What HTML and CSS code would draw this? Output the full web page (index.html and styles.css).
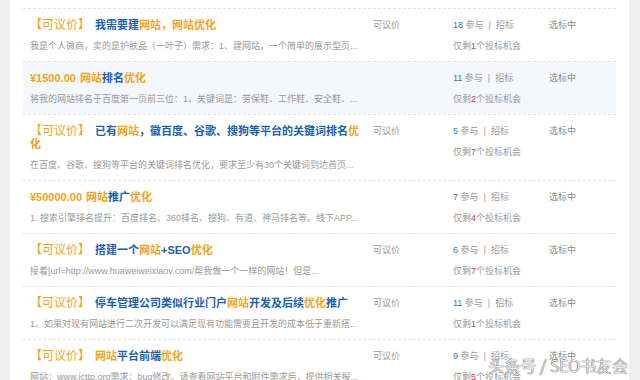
FILE: index.html
```html
<!DOCTYPE html>
<html lang="zh-CN">
<head>
<meta charset="utf-8">
<title>招标列表</title>
<link rel="stylesheet" href="styles.css">
</head>
<body>
<div class="page">
  <div class="list">
    <div class="row">
      <div class="main">
        <div class="title"><span class="tag">【可议价】</span><span class="b">我需要建</span><span class="o">网站，网站优化</span></div>
        <div class="desc">我是个人微商，卖的是护肤品（一叶子）需求：1、建网站，一个简单的展示型页...</div>
      </div>
      <div class="price">可议价</div>
      <div class="bid"><div><span class="num">18</span> 参与<span class="sep">|</span>招标</div><div class="left">仅剩<span class="red">1</span>个投标机会</div></div>
      <div class="status">选标中</div>
    </div>
    <div class="row hl">
      <div class="main">
        <div class="title"><span class="amt">¥1500.00</span><span class="o">网站</span><span class="b">排名</span><span class="o">优化</span></div>
        <div class="desc">将我的网站排名于百度第一页前三位：1、关键词是：劳保鞋、工作鞋、安全鞋、...</div>
      </div>
      <div class="price"></div>
      <div class="bid"><div><span class="num">11</span> 参与<span class="sep">|</span>招标</div><div class="left">仅剩<span class="red">2</span>个投标机会</div></div>
      <div class="status">选标中</div>
    </div>
    <div class="row">
      <div class="main">
        <div class="title"><span class="tag">【可议价】</span><span class="b">已有</span><span class="o">网站</span><span class="b">，徽百度、谷歌、搜狗等平台的关键词排名</span><span class="o">优化</span></div>
        <div class="desc">在百度、谷歌、搜狗等平台的关键词排名优化，要求至少有30个关键词到达首页...</div>
      </div>
      <div class="price">可议价</div>
      <div class="bid"><div><span class="num">5</span> 参与<span class="sep">|</span>招标</div><div class="left">仅剩<span class="red">7</span>个投标机会</div></div>
      <div class="status">选标中</div>
    </div>
    <div class="row">
      <div class="main">
        <div class="title"><span class="amt">¥50000.00</span><span class="o">网站</span><span class="b">推广</span><span class="o">优化</span></div>
        <div class="desc">1. 搜索引擎排名提升：百度排名、360排名、搜狗、有道、神马排名等。线下APP...</div>
      </div>
      <div class="price"></div>
      <div class="bid"><div><span class="num">7</span> 参与<span class="sep">|</span>招标</div><div class="left">仅剩<span class="red">4</span>个投标机会</div></div>
      <div class="status">选标中</div>
    </div>
    <div class="row">
      <div class="main">
        <div class="title"><span class="tag">【可议价】</span><span class="b">搭建一个</span><span class="o">网站</span><span class="b">+SEO</span><span class="o">优化</span></div>
        <div class="desc">接着[url=http://www.huaweiweixiaov.com/帮我做一个一样的网站！但是...</div>
      </div>
      <div class="price">可议价</div>
      <div class="bid"><div><span class="num">6</span> 参与<span class="sep">|</span>招标</div><div class="left">仅剩<span class="red">7</span>个投标机会</div></div>
      <div class="status">选标中</div>
    </div>
    <div class="row">
      <div class="main">
        <div class="title"><span class="tag">【可议价】</span><span class="b">停车管理公司类似行业门户</span><span class="o">网站</span><span class="b">开发及后续</span><span class="o">优化</span><span class="b">推广</span></div>
        <div class="desc">1、如果对现有网站进行二次开发可以满足现有功能需要且开发的成本低于重新搭...</div>
      </div>
      <div class="price">可议价</div>
      <div class="bid"><div><span class="num">11</span> 参与<span class="sep">|</span>招标</div><div class="left">仅剩<span class="red">1</span>个投标机会</div></div>
      <div class="status">选标中</div>
    </div>
    <div class="row">
      <div class="main">
        <div class="title"><span class="tag">【可议价】</span><span class="o">网站</span><span class="b">平台前端</span><span class="o">优化</span></div>
        <div class="desc">网站：www.icttp.org需求：bug修改。请查看网站平台和附件需求后，提供相关报...</div>
      </div>
      <div class="price">可议价</div>
      <div class="bid"><div><span class="num">9</span> 参与<span class="sep">|</span>招标</div><div class="left">仅剩<span class="red">5</span>个投标机会</div></div>
      <div class="status">选标中</div>
    </div>
  </div>
  <div class="watermark">头条号 / SEO书友会</div>
</div>
</body>
</html>
```
FILE: styles.css
```css
html, body {
  margin: 0;
  padding: 0;
  height: 380px;
  overflow: hidden;
}
body {
  background: #efefef;
  font-family: "Liberation Sans", "Noto Sans CJK SC", sans-serif;
}
.page {
  position: relative;
  margin-left: 10px;
  width: 619px;
  height: 380px;
  background: #fff;
}
.list {
  padding: 8px 13px 0;
}
.row {
  display: grid;
  grid-template-columns: 343px 80px 96px 1fr;
  border-top: 1px dashed #e2e2e2;
  padding: 10px 0 9px 7px;
  font-size: 9px;
  line-height: 13px;
  color: #999;
}
.row.hl {
  background: #f4f7fc;
}
.main {
  padding-right: 10px;
  min-width: 0;
}
.title {
  font-size: 11px;
  line-height: 13px;
  font-weight: bold;
}
.tag {
  font-size: 12px;
  font-weight: normal;
  color: #f0a425;
  margin-right: 5px;
}
.amt {
  color: #f5a31a;
  font-size: 11px;
  margin-right: 4px;
}
.b { color: #1b5fad; }
.o { color: #f5a31a; }
.desc {
  margin-top: 8px;
  line-height: 12px;
  white-space: nowrap;
  overflow: hidden;
  color: #999;
}
.price {
  color: #999;
}
.bid .left {
  margin-top: 8px;
  line-height: 12px;
}
.sep {
  margin: 0 5px;
}
.num {
  color: #3a74be;
}
.red {
  color: #e2314a;
}
.status {
  color: #8a8a8a;
}
.watermark {
  position: absolute;
  right: 1px;
  bottom: 6px;
  font-size: 16px;
  line-height: 18px;
  font-family: "Noto Sans CJK SC", sans-serif;
  font-weight: 300;
  color: #fafafa;
  text-shadow: 0 0 1px #555, 0 0 1px #555, 0 0 1px #777;
}
```
